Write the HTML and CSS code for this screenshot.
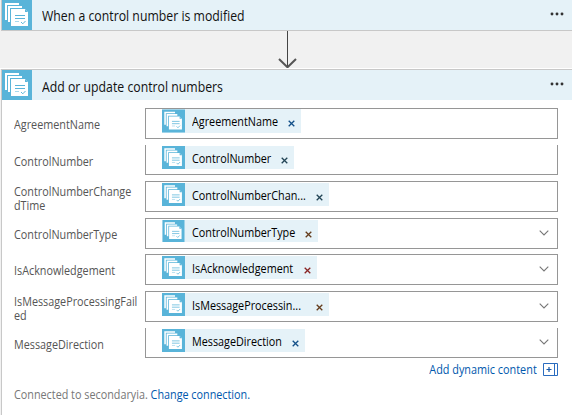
FILE: index.html
```
<!DOCTYPE html>
<html lang="en">
<head>
<meta charset="utf-8">
<title>Control numbers</title>
<link rel="stylesheet" href="styles.css">
</head>
<body>
<svg class="defs" width="0" height="0">
  <symbol id="docs" viewBox="0 0 30 30">
    <rect width="30" height="30" fill="#59b4d9"/>
    <path d="M3 3h14v2H5v15H3z" fill="#fff"/>
    <path d="M6 6h14v2H8v14H6z" fill="#fff"/>
    <path d="M9 9h14l3 3v14H9z" fill="#fff"/>
    <path d="M23 9v3h3z" fill="#59b4d9"/>
    <path d="M13 15.500h10M13 18.500h10" stroke="#59b4d9" fill="none"/>
    <path d="M13 21.500h4" stroke="#a8d8ec" fill="none"/>
    <path d="M19 22l1.800 1.800L23.500 21" stroke="#59b4d9" fill="none"/>
  </symbol>
  <symbol id="x" viewBox="0 0 7 7"><path d="M.7.7l5.600 5.600M6.300.7L.7 6.300" stroke="currentColor" stroke-width="1.300"/></symbol>
  <symbol id="chev" viewBox="0 0 10 6"><path d="M.7.7L5 5 9.300.7" fill="none" stroke="#777" stroke-width="1.100"/></symbol>
  <symbol id="dots" viewBox="0 0 14 4"><g fill="#333"><circle cx="2" cy="2" r="1.450"/><circle cx="7" cy="2" r="1.450"/><circle cx="12" cy="2" r="1.450"/></g></symbol>
</svg>

<header class="head first">
  <svg class="logo"><use href="#docs"/></svg>
  <h2>When a control number is modified</h2>
  <svg class="dots"><use href="#dots"/></svg>
</header>

<div class="link">
  <svg width="20" height="37" viewBox="0 0 20 37"><path d="M9.500 0v36" stroke="#444"/><path d="M1 28l8.500 8.300L18 28" fill="none" stroke="#555" stroke-width="2"/></svg>
</div>

<section class="card">
  <header class="head">
    <svg class="logo"><use href="#docs"/></svg>
    <h2 class="lower">Add or update control numbers</h2>
    <svg class="dots"><use href="#dots"/></svg>
  </header>
  <div class="form">
    <div class="row r1"><label><span>AgreementName</span></label><div class="field"><div class="chip"><svg class="ico"><use href="#docs"/></svg><span>AgreementName</span><svg class="x blue"><use href="#x"/></svg></div></div></div>
    <div class="row r2 open"><label><span>ControlNumber</span></label><div class="field"><div class="chip"><svg class="ico"><use href="#docs"/></svg><span>ControlNumber</span><svg class="x"><use href="#x"/></svg></div></div></div>
    <div class="row r3 two"><label><span>ControlNumberChange<br>dTime</span></label><div class="field"><div class="chip"><svg class="ico"><use href="#docs"/></svg><span>ControlNumberChan...</span><svg class="x"><use href="#x"/></svg></div></div></div>
    <div class="row r4"><label><span>ControlNumberType</span></label><div class="field"><div class="chip"><svg class="ico"><use href="#docs"/></svg><span>ControlNumberType</span><svg class="x brown"><use href="#x"/></svg></div><svg class="chev"><use href="#chev"/></svg></div></div>
    <div class="row r5"><label><span>IsAcknowledgement</span></label><div class="field"><div class="chip"><svg class="ico"><use href="#docs"/></svg><span>IsAcknowledgement</span><svg class="x red"><use href="#x"/></svg></div><svg class="chev"><use href="#chev"/></svg></div></div>
    <div class="row r6 two"><label><span>IsMessageProcessingFail<br>ed</span></label><div class="field"><div class="chip"><svg class="ico"><use href="#docs"/></svg><span>IsMessageProcessin...</span><svg class="x brown"><use href="#x"/></svg></div><svg class="chev"><use href="#chev"/></svg></div></div>
    <div class="row r7 open"><label><span>MessageDirection</span></label><div class="field"><div class="chip"><svg class="ico"><use href="#docs"/></svg><span>MessageDirection</span><svg class="x blue"><use href="#x"/></svg></div><svg class="chev"><use href="#chev"/></svg></div></div>
  </div>
  <div class="dynamic"><a>Add dynamic content</a>
    <svg width="15" height="13" viewBox="0 0 15 13"><path d="M.5.5h14v12H.5zM11.500.5v12" fill="none" stroke="#2a6cbf"/><path d="M3.500 6.500h5M6 4v5" stroke="#1557a8" stroke-width="1.200"/></svg>
  </div>
  <p class="conn">Connected to secondaryia. <a>Change connection.</a></p>
</section>
</body>
</html>
```
FILE: styles.css
```
* { box-sizing: border-box; }
body { margin: 0; width: 572px; height: 415px; overflow: hidden; background: #f1f1f1; font-family: "Open Sans", "Noto Sans", sans-serif; font-size: 12px; color: #000; }
svg { display: block; flex: none; }
.defs { position: absolute; }
/* Slightly condensed lettering */
label span, .chip span, .conn { display: inline-block; transform: scaleX(.9); transform-origin: left; }
.dynamic a { display: inline-block; transform: scaleX(.905); transform-origin: right; }
.head { display: flex; align-items: center; height: 30px; background: #e5f2f8; }
.first { height: 31px; margin-left: 1px; border-left: 1px solid #c8c8c8; border-bottom: 1px solid #c8c8c8; }
.logo { width: 30px; height: 30px; }
h2 { margin: 0 auto 0 10px; font-size: 14px; font-weight: 400; line-height: 30px; padding-top: 1px; white-space: nowrap; color: #111; transform: scaleX(.877); transform-origin: left; }
.lower { padding-top: 3px; }
.dots { width: 14px; height: 4px; margin: 0 8px 2px 0; }
.link { height: 38px; display: flex; padding-left: 278px; border-bottom: 1px solid #fff; }
.card { height: 346px; margin-left: 1px; background: #fff; border-left: 1px solid #c8c8c8; border-top: 1px solid #c8c8c8; }
.form { display: flex; flex-direction: column; gap: 6px; padding: 8px 14px 0 12px; }
.row { display: flex; height: 31px; }
.r5 { margin-top: -1px; }
.row.open { height: 30px; }
label { width: 131px; flex: none; line-height: 14px; padding-top: 10px; color: #555; white-space: nowrap; }
.two label { padding-top: 4px; }
.field { flex: 1; display: flex; align-items: flex-start; justify-content: space-between; border: 1px solid #969696; padding: 1px 8px 0 16px; }
.open .field { border-top: 0; }
.r1 .field { padding-top: 0; }
.chip { display: flex; width: 139px; height: 23px; background: #e5f2f8; padding-right: 6px; white-space: nowrap; line-height: 25px; }
.r1 .chip { height: 24px; }
.r2 .chip { width: 132px; }
.r3 .chip, .r6 .chip { width: 167px; }
.r4 .chip { width: 156px; height: 22px; }
.r5 .chip { width: 155px; }
.r7 .chip { width: 143px; }
.chip span { width: 0; margin-left: 7px; transform-origin: 0 50%; }
.ico { width: 23px; height: 100%; }
.x { width: 7px; height: 7px; margin: 11px 0 0 auto; color: #245; }
.blue { color: #124f88; }
.brown { color: #643c1c; }
.red { color: #8a2525; }
.chev { width: 10px; height: 6px; margin-top: 10px; }
.dynamic { display: flex; justify-content: flex-end; align-items: center; gap: 6px; height: 22px; padding-right: 14px; color: #0058ad; }
.conn { margin: 7px 0 0 12px; line-height: 16px; color: #777; }
.conn a { color: #0058ad; }
```
